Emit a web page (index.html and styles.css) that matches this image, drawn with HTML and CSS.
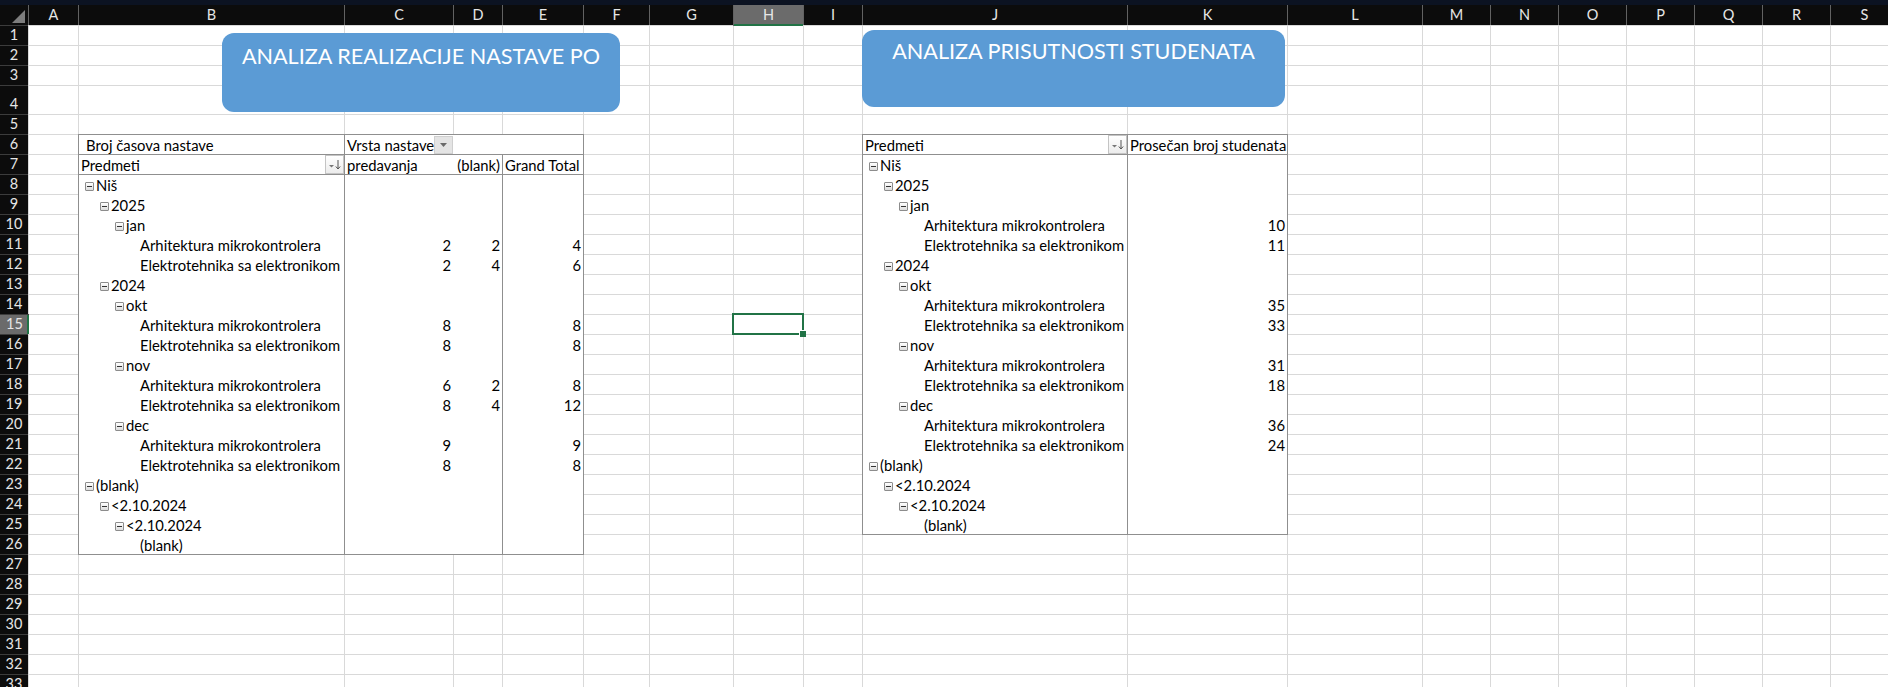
FILE: index.html
```html
<!DOCTYPE html>
<html lang="sr">
<head>
<meta charset="utf-8">
<title>Analiza nastave</title>
<link rel="stylesheet" href="styles.css">
</head>
<body>
<div class="topbar"></div>
<div class="sheet">
  <div class="cells"></div>

  <div class="pivot pv1">
    <div class="prow hdr top">
      <div class="c t ind">Broj časova nastave</div>
      <div class="c t">Vrsta nastave<span class="ddbtn"><svg width="17" height="16" viewBox="0 0 17 16"><polygon points="5,6 12,6 8.5,10" fill="#6a6a6a"/></svg></span></div>
      <div class="c"></div>
      <div class="c"></div>
    </div>
    <div class="prow hdr">
      <div class="c t">Predmeti<span class="sortbtn"><svg width="17" height="17" viewBox="0 0 17 17"><polygon points="3,9 8,9 5.5,11.5" fill="#777"/><line x1="12" y1="4" x2="12" y2="13" stroke="#555" stroke-width="1"/><polyline points="9.8,10.5 12,13 14.2,10.5" fill="none" stroke="#555" stroke-width="1"/></svg></span></div>
      <div class="c t">predavanja</div>
      <div class="c n">(blank)</div>
      <div class="c t">Grand Total</div>
    </div>
    <div class="prow"><div class="c l0"><i class="tg"></i>Niš</div><div class="c"></div><div class="c"></div><div class="c"></div></div>
    <div class="prow"><div class="c l1"><i class="tg"></i>2025</div><div class="c"></div><div class="c"></div><div class="c"></div></div>
    <div class="prow"><div class="c l2"><i class="tg"></i>jan</div><div class="c"></div><div class="c"></div><div class="c"></div></div>
    <div class="prow"><div class="c l3">Arhitektura mikrokontrolera</div><div class="c n">2</div><div class="c n">2</div><div class="c n">4</div></div>
    <div class="prow"><div class="c l3">Elektrotehnika sa elektronikom</div><div class="c n">2</div><div class="c n">4</div><div class="c n">6</div></div>
    <div class="prow"><div class="c l1"><i class="tg"></i>2024</div><div class="c"></div><div class="c"></div><div class="c"></div></div>
    <div class="prow"><div class="c l2"><i class="tg"></i>okt</div><div class="c"></div><div class="c"></div><div class="c"></div></div>
    <div class="prow"><div class="c l3">Arhitektura mikrokontrolera</div><div class="c n">8</div><div class="c n"></div><div class="c n">8</div></div>
    <div class="prow"><div class="c l3">Elektrotehnika sa elektronikom</div><div class="c n">8</div><div class="c n"></div><div class="c n">8</div></div>
    <div class="prow"><div class="c l2"><i class="tg"></i>nov</div><div class="c"></div><div class="c"></div><div class="c"></div></div>
    <div class="prow"><div class="c l3">Arhitektura mikrokontrolera</div><div class="c n">6</div><div class="c n">2</div><div class="c n">8</div></div>
    <div class="prow"><div class="c l3">Elektrotehnika sa elektronikom</div><div class="c n">8</div><div class="c n">4</div><div class="c n">12</div></div>
    <div class="prow"><div class="c l2"><i class="tg"></i>dec</div><div class="c"></div><div class="c"></div><div class="c"></div></div>
    <div class="prow"><div class="c l3">Arhitektura mikrokontrolera</div><div class="c n">9</div><div class="c n"></div><div class="c n">9</div></div>
    <div class="prow"><div class="c l3">Elektrotehnika sa elektronikom</div><div class="c n">8</div><div class="c n"></div><div class="c n">8</div></div>
    <div class="prow"><div class="c l0"><i class="tg"></i>(blank)</div><div class="c"></div><div class="c"></div><div class="c"></div></div>
    <div class="prow"><div class="c l1"><i class="tg"></i>&lt;2.10.2024</div><div class="c"></div><div class="c"></div><div class="c"></div></div>
    <div class="prow"><div class="c l2"><i class="tg"></i>&lt;2.10.2024</div><div class="c"></div><div class="c"></div><div class="c"></div></div>
    <div class="prow"><div class="c l3">(blank)</div><div class="c"></div><div class="c"></div><div class="c"></div></div>
  </div>

  <div class="pivot pv2">
    <div class="prow hdr">
      <div class="c t">Predmeti<span class="sortbtn"><svg width="17" height="17" viewBox="0 0 17 17"><polygon points="3,9 8,9 5.5,11.5" fill="#777"/><line x1="12" y1="4" x2="12" y2="13" stroke="#555" stroke-width="1"/><polyline points="9.8,10.5 12,13 14.2,10.5" fill="none" stroke="#555" stroke-width="1"/></svg></span></div>
      <div class="c t">Prosečan broj studenata</div>
    </div>
    <div class="prow"><div class="c l0"><i class="tg"></i>Niš</div><div class="c"></div></div>
    <div class="prow"><div class="c l1"><i class="tg"></i>2025</div><div class="c"></div></div>
    <div class="prow"><div class="c l2"><i class="tg"></i>jan</div><div class="c"></div></div>
    <div class="prow"><div class="c l3">Arhitektura mikrokontrolera</div><div class="c n">10</div></div>
    <div class="prow"><div class="c l3">Elektrotehnika sa elektronikom</div><div class="c n">11</div></div>
    <div class="prow"><div class="c l1"><i class="tg"></i>2024</div><div class="c"></div></div>
    <div class="prow"><div class="c l2"><i class="tg"></i>okt</div><div class="c"></div></div>
    <div class="prow"><div class="c l3">Arhitektura mikrokontrolera</div><div class="c n">35</div></div>
    <div class="prow"><div class="c l3">Elektrotehnika sa elektronikom</div><div class="c n">33</div></div>
    <div class="prow"><div class="c l2"><i class="tg"></i>nov</div><div class="c"></div></div>
    <div class="prow"><div class="c l3">Arhitektura mikrokontrolera</div><div class="c n">31</div></div>
    <div class="prow"><div class="c l3">Elektrotehnika sa elektronikom</div><div class="c n">18</div></div>
    <div class="prow"><div class="c l2"><i class="tg"></i>dec</div><div class="c"></div></div>
    <div class="prow"><div class="c l3">Arhitektura mikrokontrolera</div><div class="c n">36</div></div>
    <div class="prow"><div class="c l3">Elektrotehnika sa elektronikom</div><div class="c n">24</div></div>
    <div class="prow"><div class="c l0"><i class="tg"></i>(blank)</div><div class="c"></div></div>
    <div class="prow"><div class="c l1"><i class="tg"></i>&lt;2.10.2024</div><div class="c"></div></div>
    <div class="prow"><div class="c l2"><i class="tg"></i>&lt;2.10.2024</div><div class="c"></div></div>
    <div class="prow"><div class="c l3">(blank)</div><div class="c"></div></div>
  </div>

  <div class="active"></div>

  <div class="corner"></div>
  <div class="ch">A</div>
  <div class="ch">B</div>
  <div class="ch">C</div>
  <div class="ch">D</div>
  <div class="ch">E</div>
  <div class="ch">F</div>
  <div class="ch">G</div>
  <div class="ch sel">H</div>
  <div class="ch">I</div>
  <div class="ch">J</div>
  <div class="ch">K</div>
  <div class="ch">L</div>
  <div class="ch">M</div>
  <div class="ch">N</div>
  <div class="ch">O</div>
  <div class="ch">P</div>
  <div class="ch">Q</div>
  <div class="ch">R</div>
  <div class="ch">S</div>

  <div class="rh">1</div>
  <div class="rh">2</div>
  <div class="rh">3</div>
  <div class="rh">4</div>
  <div class="rh">5</div>
  <div class="rh">6</div>
  <div class="rh">7</div>
  <div class="rh">8</div>
  <div class="rh">9</div>
  <div class="rh">10</div>
  <div class="rh">11</div>
  <div class="rh">12</div>
  <div class="rh">13</div>
  <div class="rh">14</div>
  <div class="rh sel">15</div>
  <div class="rh">16</div>
  <div class="rh">17</div>
  <div class="rh">18</div>
  <div class="rh">19</div>
  <div class="rh">20</div>
  <div class="rh">21</div>
  <div class="rh">22</div>
  <div class="rh">23</div>
  <div class="rh">24</div>
  <div class="rh">25</div>
  <div class="rh">26</div>
  <div class="rh">27</div>
  <div class="rh">28</div>
  <div class="rh">29</div>
  <div class="rh">30</div>
  <div class="rh">31</div>
  <div class="rh">32</div>
  <div class="rh">33</div>

  <div class="shape shape1">ANALIZA REALIZACIJE NASTAVE PO</div>
  <div class="shape shape2">ANALIZA PRISUTNOSTI STUDENATA</div>
</div>
</body>
</html>
```
FILE: styles.css
```css
html, body {
  margin: 0;
  padding: 0;
}
body {
  width: 1888px;
  height: 687px;
  overflow: hidden;
  background: #ffffff;
  font-family: Lato, "Liberation Sans", sans-serif;
  font-size: 14.8px;
  color: #000;
}
.topbar {
  height: 5px;
  background: #0c1322;
}
.sheet {
  position: relative;
  display: grid;
  width: max-content;
  grid-template-columns: 28px 50px 266px 109px 49px 81px 66px 84px 70px 59px 265px 160px 135px repeat(7, 68px);
  grid-template-rows: 20px repeat(3, 20px) 29px repeat(29, 20px);
}

/* cell area with gridlines */
.cells {
  grid-column: 2 / -1;
  grid-row: 2 / -1;
  background-color: #fff;
  background-image:
    linear-gradient(to right,
      #d9d9d9 0 1px, transparent 1px 50px,
      #d9d9d9 50px 51px, transparent 51px 316px,
      #d9d9d9 316px 317px, transparent 317px 425px,
      #d9d9d9 425px 426px, transparent 426px 474px,
      #d9d9d9 474px 475px, transparent 475px 555px,
      #d9d9d9 555px 556px, transparent 556px 621px,
      #d9d9d9 621px 622px, transparent 622px 705px,
      #d9d9d9 705px 706px, transparent 706px 775px,
      #d9d9d9 775px 776px, transparent 776px 834px,
      #d9d9d9 834px 835px, transparent 835px 1099px,
      #d9d9d9 1099px 1100px, transparent 1100px 1259px,
      #d9d9d9 1259px 1260px, transparent 1260px 1394px,
      #d9d9d9 1394px 1395px, transparent 1395px 1462px,
      #d9d9d9 1462px 1463px, transparent 1463px 1530px,
      #d9d9d9 1530px 1531px, transparent 1531px 1598px,
      #d9d9d9 1598px 1599px, transparent 1599px 1666px,
      #d9d9d9 1666px 1667px, transparent 1667px 1734px,
      #d9d9d9 1734px 1735px, transparent 1735px 1802px,
      #d9d9d9 1802px 1803px, transparent 1803px),
    repeating-linear-gradient(to bottom, #d9d9d9 0 1px, transparent 1px 20px),
    repeating-linear-gradient(to bottom, #d9d9d9 0 1px, transparent 1px 20px);
  background-size: 100% 100%, 100% 61px, 100% calc(100% - 89px);
  background-position: 0 0, 0 0, 0 89px;
  background-repeat: no-repeat;
}

/* headers */
.corner {
  position: relative;
  background: #0c0c0c;
}
.corner::after {
  content: "";
  position: absolute;
  right: 3px;
  bottom: 2px;
  width: 13px;
  height: 13px;
  background: #7d7d7d;
  clip-path: polygon(100% 0, 100% 100%, 0 100%);
}
.ch {
  background: #0c0c0c;
  color: #e6e6e6;
  border-left: 1px solid #626262;
  text-align: center;
  line-height: 20px;
  font-size: 14.5px;
}
.ch.sel {
  background: #6b6b6b;
  margin-bottom: -1px;
  box-shadow: inset 0 -2px 0 #217346;
}
.rh {
  grid-column: 1;
  display: flex;
  align-items: flex-end;
  justify-content: center;
  background: #0c0c0c;
  color: #e6e6e6;
  border-top: 1px solid #3c3c3c;
  line-height: 20px;
  font-size: 14.5px;
  overflow: hidden;
}
.rh.sel {
  background: #6b6b6b;
  margin-right: -1px;
  box-shadow: inset -2px 0 0 #217346;
}

/* pivot tables */
.pivot {
  display: flex;
  flex-direction: column;
  box-sizing: border-box;
  margin: 0 -1px -1px 0;
  border: 1px solid #8f8f8f;
  background: #fff;
  overflow: hidden;
}
.pv1 {
  grid-column: 3 / 7;
  grid-row: 7 / 28;
}
.pv2 {
  grid-column: 11 / 13;
  grid-row: 7 / 27;
}
.prow {
  flex: none;
  display: grid;
  height: 20px;
  line-height: 20px;
  box-sizing: border-box;
}
.pv1 .prow {
  grid-template-columns: 265px 109px 49px 81px;
}
.pv2 .prow {
  grid-template-columns: 264px 160px;
}
.prow.hdr {
  border-bottom: 1px solid #8f8f8f;
}
.prow > .c:nth-child(2) {
  border-left: 1px solid #8f8f8f;
}
.pv1 .prow:not(.top) > .c:nth-child(4) {
  border-left: 1px solid #8f8f8f;
}
.c {
  position: relative;
  box-sizing: border-box;
  min-width: 0;
  white-space: nowrap;
  overflow: hidden;
  padding: 0 2px;
}
.c.ind {
  padding-left: 7px;
}
.c.n {
  text-align: right;
  padding-right: 2px;
}
.c.l0 { padding-left: 6px; }
.c.l1 { padding-left: 21px; }
.c.l2 { padding-left: 36px; }
.c.l3 { padding-left: 61px; }

.tg {
  display: inline-block;
  position: relative;
  width: 9px;
  height: 9px;
  box-sizing: border-box;
  margin-right: 2px;
  border: 1px solid #8c8c8c;
  border-radius: 1px;
  background: linear-gradient(#ffffff, #dcdcdc);
  vertical-align: 0;
}
.tg::after {
  content: "";
  position: absolute;
  left: 1px;
  right: 1px;
  top: 3px;
  height: 1px;
  background: #333;
}

.sortbtn {
  position: absolute;
  right: 0;
  top: 0;
  width: 19px;
  height: 19px;
  box-sizing: border-box;
  border: 1px solid #c4c4c4;
  background: linear-gradient(#ffffff, #ececec);
  display: flex;
  align-items: center;
  justify-content: center;
}
.ddbtn {
  position: absolute;
  right: 0;
  top: 1px;
  width: 19px;
  height: 18px;
  box-sizing: border-box;
  border: 1px solid #cfcfcf;
  background: #e4e4e4;
  display: flex;
  align-items: center;
  justify-content: center;
}

/* active cell */
.active {
  grid-column: 9;
  grid-row: 16;
  position: relative;
  margin: -1px;
  border: 2px solid #217346;
}
.active::after {
  content: "";
  position: absolute;
  right: -4px;
  bottom: -4px;
  width: 6px;
  height: 6px;
  background: #217346;
  box-shadow: -1px -1px 0 #fff;
}

/* floating shapes */
.shape {
  position: absolute;
  box-sizing: border-box;
  background: #5b9bd5;
  color: #ffffff;
  border-radius: 12px;
  text-align: center;
  font-size: 21.6px;
  line-height: 1.2;
  white-space: nowrap;
}
.shape1 {
  left: 222px;
  top: 28px;
  width: 398px;
  height: 79px;
  padding-top: 11px;
}
.shape2 {
  left: 862px;
  top: 25px;
  width: 423px;
  height: 77px;
  padding-top: 9px;
}
```
